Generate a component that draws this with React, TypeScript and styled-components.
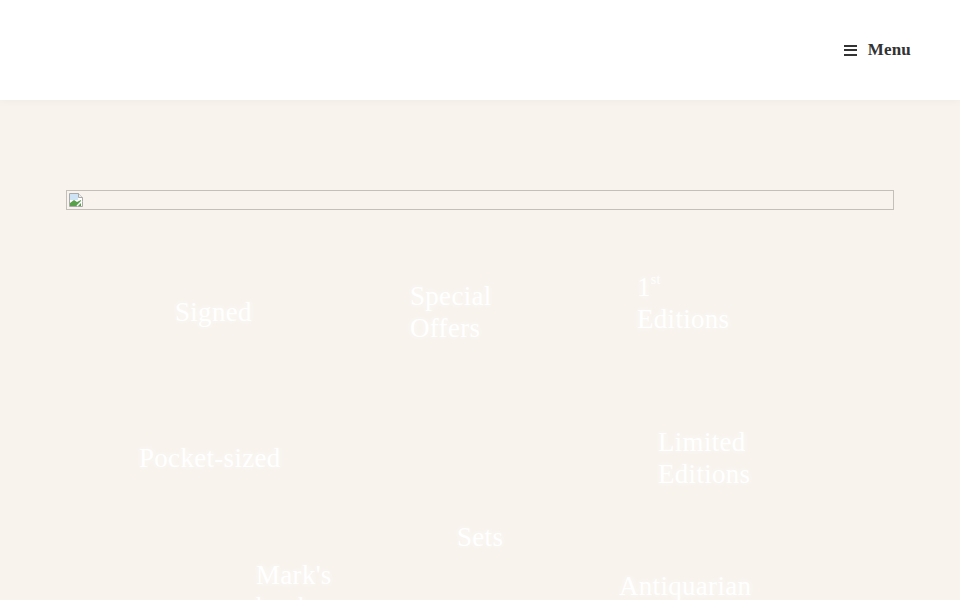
import React from "react";
import styled, { createGlobalStyle } from "styled-components";

const GlobalStyle = createGlobalStyle`
  html, body {
    margin: 0;
    padding: 0;
    background: #f8f3ed;
  }
  body {
    font-family: "Liberation Serif", "Times New Roman", serif;
  }
`;

type Label = {
  id: string;
  lines: React.ReactNode[];
  x: number;
  y: number;
};

const labels: Label[] = [
  { id: "signed", lines: ["Signed"], x: 109, y: 86 },
  { id: "offers", lines: ["Special", "Offers"], x: 344, y: 70 },
  {
    id: "first",
    lines: [
      <>
        1<sup>st</sup>
      </>,
      "Editions",
    ],
    x: 571,
    y: 61,
  },
  { id: "pocket", lines: ["Pocket-sized"], x: 73, y: 232 },
  { id: "limited", lines: ["Limited", "Editions"], x: 592, y: 216 },
  { id: "sets", lines: ["Sets"], x: 391, y: 311 },
  { id: "marks", lines: ["Mark's", "books"], x: 190, y: 349 },
  { id: "antiquarian", lines: ["Antiquarian"], x: 553, y: 360 },
];

const App = () => {
  return (
    <Page>
      <GlobalStyle />
      <Header>
        <MenuButton>
          <Burger>
            <span />
            <span />
            <span />
          </Burger>
          Menu
        </MenuButton>
      </Header>
      <Main>
        <Container>
          <BrokenImage>
            <svg width="16" height="16" viewBox="0 0 16 16">
              <path d="M1.5 1.5h9l4 4v9h-13z" fill="#fff" stroke="#a9a9a9" />
              <path d="M10.5 1.5v4h4" fill="#eee" stroke="#a9a9a9" />
              <rect x="2" y="2" width="8" height="6" fill="#cfe3f7" />
              <path d="M2 14V11l4-3 3 2 4-2v6z" fill="#58a04a" />
              <path d="M9 14l5-5" stroke="#fff" strokeWidth="1.5" />
            </svg>
          </BrokenImage>
          <Canvas>
            {labels.map((l) => (
              <Category key={l.id} style={{ left: l.x, top: l.y }}>
                {l.lines.map((line, i) => (
                  <Line key={i}>{line}</Line>
                ))}
              </Category>
            ))}
          </Canvas>
        </Container>
      </Main>
    </Page>
  );
};

export default App;

const Page = styled.div`
  width: 100%;
  min-height: 600px;
  overflow: hidden;
`;

const Header = styled.header`
  height: 100px;
  background: #fff;
  display: flex;
  justify-content: flex-end;
  align-items: center;
  padding: 0 49px 0 0;
  box-shadow: 0 1px 8px rgba(0, 0, 0, 0.04);
  position: relative;
  z-index: 2;
`;

const MenuButton = styled.div`
  display: flex;
  align-items: center;
  gap: 11px;
  font-size: 17px;
  font-weight: 700;
  color: #333;
  letter-spacing: 0.2px;
`;

const Burger = styled.div`
  display: flex;
  flex-direction: column;
  justify-content: space-between;
  width: 13px;
  height: 11px;

  span {
    display: block;
    height: 2px;
    background: #333;
  }
`;

const Main = styled.main`
  padding-top: 90px;
  height: 410px;
`;

const Container = styled.div`
  width: 828px;
  margin: 0 auto;
`;

const BrokenImage = styled.div`
  height: 20px;
  box-sizing: border-box;
  border: 1px solid #c4bfb9;
  padding: 1px;
  display: flex;
  align-items: flex-start;
`;

const Canvas = styled.div`
  position: relative;
  height: 390px;
`;

const Category = styled.div`
  position: absolute;
  font-size: 27px;
  line-height: 32px;
  color: #fff;
  white-space: nowrap;
  letter-spacing: 0.3px;
  text-shadow: 0 0 6px rgba(255, 255, 255, 0.75);

  sup {
    font-size: 14px;
    line-height: 0;
    vertical-align: 12px;
  }
`;

const Line = styled.div``;
